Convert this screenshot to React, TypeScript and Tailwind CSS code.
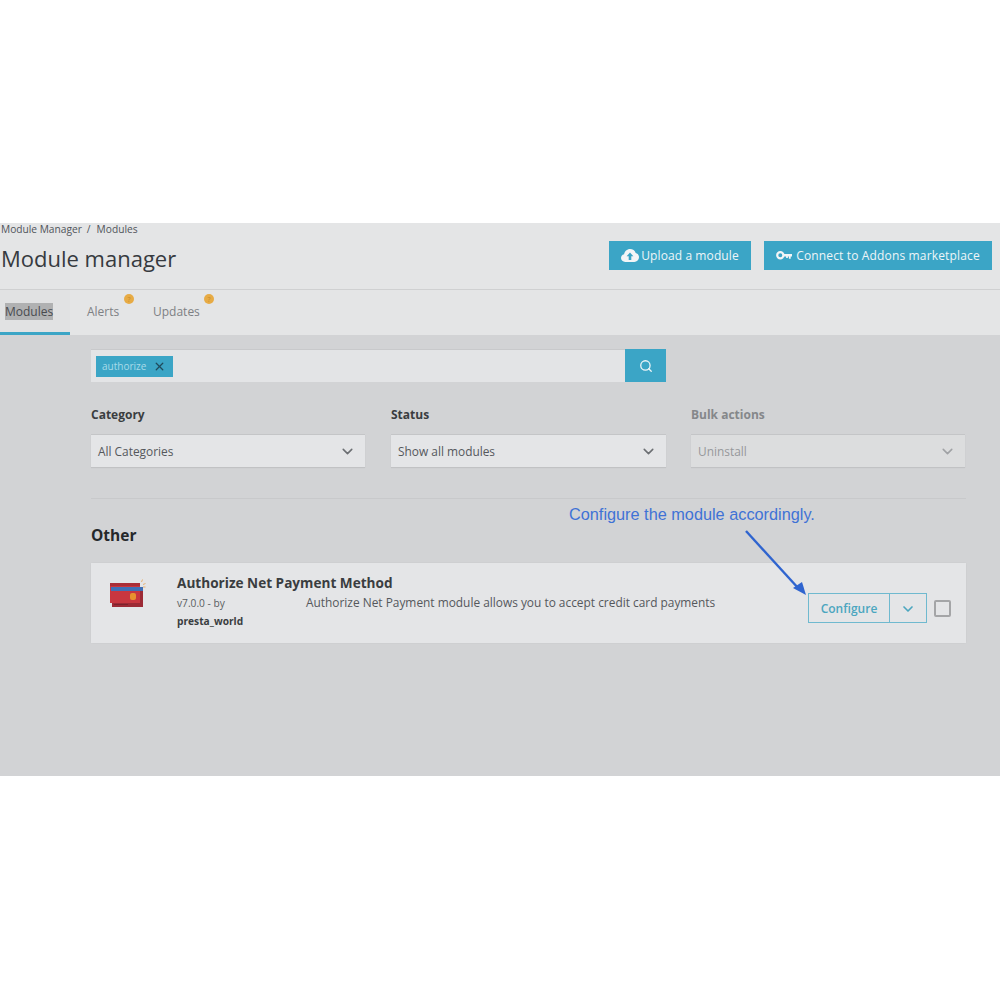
import { ChevronDown, Search, X } from "lucide-react";

function CloudUpload() {
  return (
    <svg width="18" height="13" viewBox="0 0 18 13" className="shrink-0">
      <path d="M4.2 13C1.9 13 0 11.3 0 9.1c0-1.9 1.3-3.4 3.1-3.8C3.6 2.3 6 0 9.1 0c2.6 0 4.8 1.6 5.6 3.9 1.900.4 3.300 2.100 3.300 4.200C18 10.800 15.900 13 13.300 13z" fill="#f3f5f6" />
      <path d="M9 3.600l3.400 3.700h-2.100V11H7.700V7.300H5.600z" fill="#3ba5c6" />
    </svg>
  );
}

function AddonsKey() {
  return (
    <svg width="16" height="9" viewBox="0 0 16 9" className="shrink-0">
      <circle cx="4.300" cy="4.300" r="3.100" fill="none" stroke="#f3f5f6" strokeWidth="2.200" />
      <path d="M7.500 3h8.500v2.400h-1.300v2.300h-1.800V5.400h-1v1.600H10.100V5.400H7.500z" fill="#f3f5f6" />
    </svg>
  );
}

function CardLogo() {
  return (
    <svg width="36" height="30" viewBox="0 0 36 30" className="shrink-0">
      <path d="M31.500 4l1-2.500M33 6.500l2.500-1M33 9h2.500" stroke="#e8b070" strokeWidth="1" fill="none" />
      <rect x="2" y="9" width="31" height="20" fill="#9c2a35" />
      <rect x="0" y="5" width="30" height="20" fill="#c8363f" />
      <rect x="0" y="5" width="30" height="3" fill="#a92d37" />
      <rect x="1" y="9" width="32" height="4" fill="#3f6fb5" />
      <rect x="20" y="15" width="6" height="7" rx="2" fill="#e8912f" />
      <rect x="4" y="26" width="14" height="1" fill="#7c222c" />
    </svg>
  );
}

function SelectBox({ value, muted }: { value: string; muted?: boolean }) {
  return (
    <div
      className={`h-[33px] flex items-center justify-between pl-[7px] pr-[9px] pt-px border-t border-[#c4c5c7] shadow-[0_1px_1px_rgba(0,0,0,0.08)] text-[11.9px] ${
        muted ? "bg-[#dcddde] text-[#96989b]" : "bg-[#e4e5e7] text-[#55585c]"
      }`}
    >
      <span>{value}</span>
      <ChevronDown size={17} strokeWidth={2.2} className={muted ? "text-[#a0a2a5]" : "text-[#6c6f73]"} />
    </div>
  );
}

function Filter({ label, value, muted, width }: { label: string; value: string; muted?: boolean; width: string }) {
  return (
    <div className={`flex flex-col gap-[11px] ${width}`}>
      <div className={`text-[12px] font-bold leading-[17px] ${muted ? "text-[#85878a]" : "text-[#3a3d40]"}`}>{label}</div>
      <SelectBox value={value} muted={muted} />
    </div>
  );
}

export default function App() {
  return (
    <div className="relative w-[1000px] h-[1000px] bg-white overflow-hidden font-['Open_Sans',sans-serif]">
      <div className="h-[223px]" />

      <div className="h-[553px] flex flex-col bg-[#d2d3d5]">
        {/* head */}
        <header className="h-[112px] shrink-0 flex flex-col bg-[#e4e5e6]">
          <div className="h-[67px] border-b border-[#cfd0d1] flex justify-between pl-px pr-2">
            <div>
              <div className="text-[10.2px] leading-[12px] text-[#50545a] flex gap-[5px]">
                <span>Module Manager</span>
                <span>/</span>
                <span className="ml-[1px]">Modules</span>
              </div>
              <h1 className="mt-[7px] text-[22px] leading-[33px] text-[#363a3f]">Module manager</h1>
            </div>
            <div className="flex gap-[13px] mt-[18px] h-[29px]">
              <button className="w-[142px] flex items-center justify-center gap-[2px] bg-[#3ba5c6] text-[#eef5f8] text-[12px] tracking-[0.1px]">
                <CloudUpload />
                Upload a module
              </button>
              <button className="w-[228px] flex items-center justify-center gap-[4px] bg-[#3ba5c6] text-[#eef5f8] text-[12px] tracking-[0.15px]">
                <AddonsKey />
                Connect to Addons marketplace
              </button>
            </div>
          </div>
          <nav className="flex-1 flex text-[12px] text-[#7d8084]">
            <div className="w-[70px] border-b-[3px] border-[#3ba5c6] pl-[5px] pt-[13px] bg-[#e1e2e3]">
              <span className="bg-[#b0b1b2] text-[#484b4f]">Modules</span>
            </div>
            <div className="relative ml-[17px] w-[66px] pt-[13px]">
              Alerts
              <span className="absolute left-[37px] top-[4px] w-[10px] h-[10px] rounded-full bg-[#e7ab45] flex items-center justify-center text-[7px] leading-none text-[#c58a2c]">?</span>
            </div>
            <div className="relative pt-[13px]">
              Updates
              <span className="absolute left-[51px] top-[4px] w-[10px] h-[10px] rounded-full bg-[#e7ab45] flex items-center justify-center text-[7px] leading-none text-[#c58a2c]">?</span>
            </div>
          </nav>
        </header>

        {/* content */}
        <main className="flex-1 pl-[91px] pr-[34px] pt-[14px]">
          <div className="w-[575px] h-[33px] flex">
            <div className="flex-1 flex items-center pl-[5px] bg-[#e3e4e6] border-t border-[#c8c9cb]">
              <span className="h-[21px] w-[77px] flex items-center justify-between pl-[6px] pr-[7px] bg-[#3ba5c6] text-[10px] text-[#a8dbe9]">
                authorize
                <X size={13} strokeWidth={2.400} className="text-[#1f4b5c]" />
              </span>
            </div>
            <div className="w-[41px] flex items-center justify-center bg-[#3ba5c6]">
              <Search size={14} strokeWidth={2.200} className="text-[#eef5f8]" />
            </div>
          </div>

          <div className="mt-[24px] grid grid-cols-[300px_300px_274px]">
            <Filter label="Category" value="All Categories" width="w-[274px]" />
            <Filter label="Status" value="Show all modules" width="w-[275px]" />
            <Filter label="Bulk actions" value="Uninstall" muted width="w-[274px]" />
          </div>

          <div className="mt-[31px] border-t border-[#c8c9cb]" />
          <h2 className="mt-[25px] text-[15.500px] font-bold leading-[22px] text-[#25282b]">Other</h2>

          <section className="mt-[17px] h-[80px] flex bg-[#e4e5e7] shadow-[0_0_2px_rgba(0,0,0,0.05)]">
            <div className="w-[86px] shrink-0 pl-[19px] pt-[15px]">
              <CardLogo />
            </div>
            <div className="w-[129px] shrink-0 pt-[11px]">
              <div className="w-[300px] text-[13.600px] font-bold leading-[18px] text-[#3a3d40]">Authorize Net Payment Method</div>
              <div className="mt-[4px] text-[10.200px] leading-[14px] text-[#5a5d61]">v7.0.0 - by</div>
              <div className="mt-[4px] text-[10.200px] font-bold leading-[14px] text-[#3a3d40]">presta_world</div>
            </div>
            <div className="flex-1 pt-[31px] text-[11.900px] leading-[17px] text-[#55585c]">
              Authorize Net Payment module allows you to accept credit card payments
            </div>
            <div className="flex items-center pr-[15px] pt-[10px]">
              <div className="h-[30px] flex border border-[#6fb9cf] text-[12px] font-semibold text-[#4ba6bf]">
                <span className="w-[81px] pt-px flex items-center justify-center border-r border-[#6fb9cf]">Configure</span>
                <span className="w-[36px] pt-px flex items-center justify-center">
                  <ChevronDown size={16} strokeWidth={2.500} />
                </span>
              </div>
              <div className="ml-[7px] w-[17px] h-[17px] rounded-[2px] border-2 border-[#a4a5a7]" />
            </div>
          </section>
        </main>
      </div>

      {/* annotation over the page */}
      <div className="absolute left-[569px] top-[504px] text-[16.300px] leading-[20px] text-[#3f72d6] font-['Liberation_Sans',sans-serif]">
        Configure the module accordingly.
      </div>
      <svg className="absolute left-[740px] top-[525px]" width="75" height="75" viewBox="0 0 75 75">
        <path d="M6 6L59 64" stroke="#2f64cf" strokeWidth="2.400" fill="none" />
        <path d="M66 70L53 63L62 57z" fill="#2f64cf" />
      </svg>
    </div>
  );
}
